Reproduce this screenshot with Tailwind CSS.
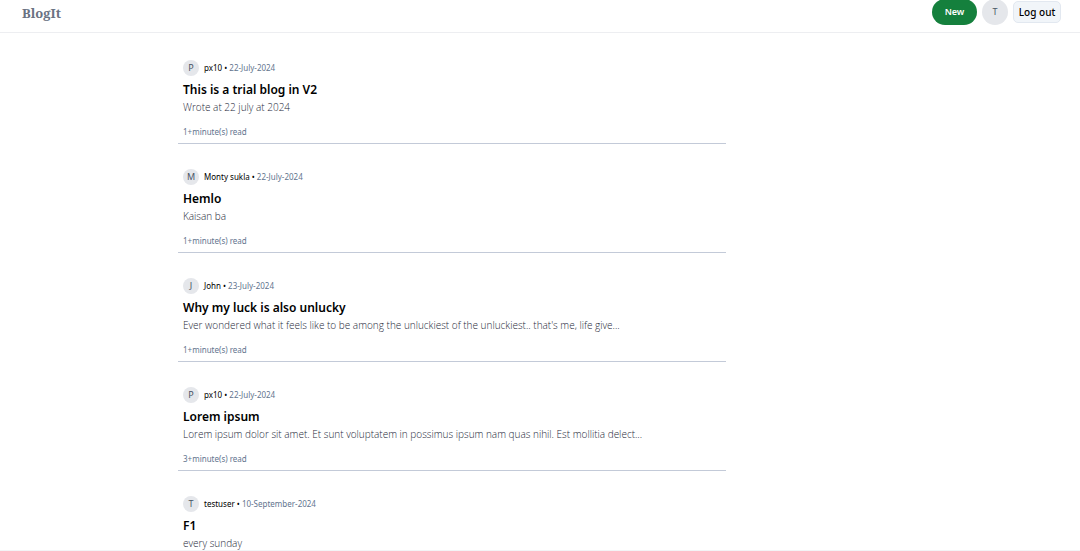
<!DOCTYPE html>
<html lang="en">
<head>
    <meta charset="UTF-8">
    <meta name="viewport" content="width=device-width, initial-scale=1.0">
    <title>BlogIt</title>
    <script src="https://cdn.jsdelivr.net/npm/@tailwindcss/browser@4"></script>
</head>
<body class="bg-white font-['Noto_Sans',sans-serif] text-black">
    <div class="h-screen flex flex-col overflow-hidden border-b border-gray-100">
        <!-- Top bar -->
        <header class="shrink-0 h-[33px] flex justify-between items-center border-b border-gray-200/70 pl-[22px] pr-[19px] pb-2">
            <a href="#" class="mt-0.5 font-['Noto_Serif','DejaVu_Serif',serif] font-bold text-[13px] leading-4 text-gray-500">BlogIt</a>
            <div class="flex items-center gap-[5px]">
                <button type="button" class="h-[26px] w-[45px] rounded-full bg-[#15803d] text-white text-[9px] font-semibold">New</button>
                <div class="size-[26px] rounded-full bg-gray-200 flex items-center justify-center text-[9px] text-gray-600">T</div>
                <button type="button" class="h-[22px] w-[48px] rounded-[5px] border border-slate-200 bg-slate-100 text-[10px] font-medium whitespace-nowrap">Log out</button>
            </div>
        </header>

        <!-- Blog list -->
        <main class="w-[548px] ml-[178px] pt-0.5">
            <a href="#" class="block h-[109px] border-b border-[#c3cad8] px-[5px] pt-[25px]">
                <div class="flex items-center text-[8px] leading-4">
                    <span class="size-4 mr-[5px] rounded-full bg-gray-200 flex items-center justify-center text-[9px] text-gray-600">P</span>
                    <span>px10 &bull; <span class="text-slate-500">22-July-2024</span></span>
                </div>
                <h2 class="mt-[5px] text-[12px] leading-[18px] font-semibold">This is a trial blog in V2</h2>
                <p class="font-['Open_Sans','Noto_Sans',sans-serif] text-[10px] leading-4 font-light text-gray-800">Wrote at 22 july at 2024</p>
                <p class="mt-[9px] text-[8px] leading-4 text-slate-500">1+minute(s) read</p>
            </a>
            <a href="#" class="block h-[109px] border-b border-[#c3cad8] px-[5px] pt-[25px]">
                <div class="flex items-center text-[8px] leading-4">
                    <span class="size-4 mr-[5px] rounded-full bg-gray-200 flex items-center justify-center text-[9px] text-gray-600">M</span>
                    <span>Monty sukla &bull; <span class="text-slate-500">22-July-2024</span></span>
                </div>
                <h2 class="mt-[5px] text-[12px] leading-[18px] font-semibold">Hemlo</h2>
                <p class="font-['Open_Sans','Noto_Sans',sans-serif] text-[10px] leading-4 font-light text-gray-800">Kaisan ba</p>
                <p class="mt-[9px] text-[8px] leading-4 text-slate-500">1+minute(s) read</p>
            </a>
            <a href="#" class="block h-[109px] border-b border-[#c3cad8] px-[5px] pt-[25px]">
                <div class="flex items-center text-[8px] leading-4">
                    <span class="size-4 mr-[5px] rounded-full bg-gray-200 flex items-center justify-center text-[9px] text-gray-600">J</span>
                    <span>John &bull; <span class="text-slate-500">23-July-2024</span></span>
                </div>
                <h2 class="mt-[5px] text-[12px] leading-[18px] font-semibold">Why my luck is also unlucky</h2>
                <p class="font-['Open_Sans','Noto_Sans',sans-serif] text-[10px] leading-4 font-light text-gray-800">Ever wondered what it feels like to be among the unluckiest of the unluckiest.. that's me, life give...</p>
                <p class="mt-[9px] text-[8px] leading-4 text-slate-500">1+minute(s) read</p>
            </a>
            <a href="#" class="block h-[109px] border-b border-[#c3cad8] px-[5px] pt-[25px]">
                <div class="flex items-center text-[8px] leading-4">
                    <span class="size-4 mr-[5px] rounded-full bg-gray-200 flex items-center justify-center text-[9px] text-gray-600">P</span>
                    <span>px10 &bull; <span class="text-slate-500">22-July-2024</span></span>
                </div>
                <h2 class="mt-[5px] text-[12px] leading-[18px] font-semibold">Lorem ipsum</h2>
                <p class="font-['Open_Sans','Noto_Sans',sans-serif] text-[10px] leading-4 font-light text-gray-800">Lorem ipsum dolor sit amet. Et sunt voluptatem in possimus ipsum nam quas nihil. Est mollitia delect...</p>
                <p class="mt-[9px] text-[8px] leading-4 text-slate-500">3+minute(s) read</p>
            </a>
            <a href="#" class="block px-[5px] pt-[25px]">
                <div class="flex items-center text-[8px] leading-4">
                    <span class="size-4 mr-[5px] rounded-full bg-gray-200 flex items-center justify-center text-[9px] text-gray-600">T</span>
                    <span>testuser &bull; <span class="text-slate-500">10-September-2024</span></span>
                </div>
                <h2 class="mt-[5px] text-[12px] leading-[18px] font-semibold">F1</h2>
                <p class="font-['Open_Sans','Noto_Sans',sans-serif] text-[10px] leading-4 font-light text-gray-800">every sunday</p>
            </a>
        </main>
    </div>
</body>
</html>
